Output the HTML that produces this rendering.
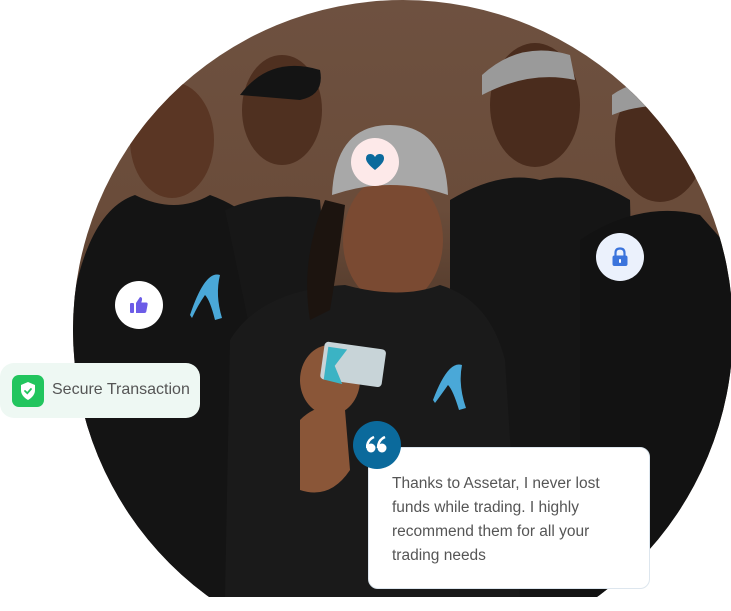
<!DOCTYPE html>
<html><head><meta charset="utf-8"><style>
html,body{margin:0;padding:0;background:#fff;width:731px;height:611px;overflow:hidden;font-family:"Liberation Sans",sans-serif}
.circ{position:absolute;left:0;top:0;width:731px;height:597px;clip-path:circle(330px at 403px 330px);background:linear-gradient(180deg,#6e5140 0%,#6a4c3a 35%,#4a3426 60%,#1c1816 100%)}
.abs{position:absolute}
.ic{position:absolute;width:48px;height:48px;border-radius:50%;display:flex;align-items:center;justify-content:center}
</style></head><body>
<div class="circ">
<svg width="731" height="597" viewBox="0 0 731 597" style="position:absolute;left:0;top:0">
 <ellipse cx="172" cy="140" rx="42" ry="58" fill="#5a3624"/>
 <ellipse cx="282" cy="110" rx="40" ry="55" fill="#4f3020"/>
 <ellipse cx="535" cy="105" rx="45" ry="62" fill="#4a2c1d"/>
 <ellipse cx="660" cy="140" rx="45" ry="62" fill="#4a2c1d"/>
 <ellipse cx="393" cy="240" rx="50" ry="65" fill="#7a4a32"/>
 <path d="M240 95 Q270 55 320 70 Q325 95 300 100 Z" fill="#141414"/>
 <path d="M482 75 Q520 40 570 55 L575 80 Q530 70 482 95Z" fill="#9a9a9a"/>
 <path d="M332 195 Q335 125 390 125 Q445 125 448 195 Q390 175 332 195Z" fill="#a8a8a8"/>
 <path d="M612 95 Q640 75 680 85 L690 110 Q650 100 612 115Z" fill="#9a9a9a"/>
 <path d="M73 300 Q90 210 135 195 Q175 215 210 195 Q280 220 290 300 L300 597 L73 597Z" fill="#141414"/>
 <path d="M225 210 Q270 190 320 200 L330 320 L250 330Z" fill="#171717"/>
 <path d="M450 200 Q500 170 540 180 Q580 170 630 200 L640 597 L450 597Z" fill="#151515"/>
 <path d="M580 240 Q640 200 700 215 L740 260 L740 597 L580 597Z" fill="#121212"/>
 <path d="M230 340 Q260 290 345 285 Q400 300 440 285 Q490 300 505 360 L520 597 L225 597Z" fill="#1a1a1a"/>
 <path d="M325 200 Q300 260 310 320 L330 310 Q340 250 345 205Z" fill="#1c140f"/>
 <path d="M190 315 Q205 270 220 275 Q215 295 222 318 L215 320 Q210 300 205 295 Q198 305 192 318Z" fill="#4aa8d8"/>
 <path d="M433 400 Q448 360 462 365 Q458 385 466 408 L459 410 Q453 390 448 385 Q441 395 435 403Z" fill="#4aa8d8"/>
 <ellipse cx="330" cy="380" rx="30" ry="35" fill="#8a5638"/>
 <path d="M300 420 Q320 400 345 410 L350 470 Q330 500 300 490Z" fill="#8a5638"/>
 <rect x="322" y="345" width="62" height="38" rx="4" fill="#c8d4d8" transform="rotate(8 350 365)"/>
 <path d="M326 350 L345 350 L335 368 L345 385 L326 383Z" fill="#3bb3c4" transform="rotate(8 350 365)"/>
</svg>
</div>

<div class="abs" style="left:0;top:363px;width:200px;height:55px;background:#eef8f3;border-radius:14px"></div>
<div class="abs" style="left:12px;top:375px;width:32px;height:32px;border-radius:7px;background:#22c55e;display:flex;align-items:center;justify-content:center">
<svg width="18" height="20" viewBox="0 0 18 20"><path d="M9 1 L16 4 V9 Q16 15 9 19 Q2 15 2 9 V4Z" fill="#fff"/><path d="M6 10 L8.3 12.2 L12 8" stroke="#22c55e" stroke-width="1.8" fill="none" stroke-linecap="round"/></svg></div>
<div class="abs" style="left:52px;top:381px;font-size:16px;color:#555">Secure Transaction</div>

<div class="abs" style="left:368px;top:447px;width:282px;height:142px;background:#fff;border:1px solid #dde6ee;border-radius:10px;box-sizing:border-box"></div>
<div class="abs" style="left:392px;top:472px;width:222px;font-size:15.5px;line-height:24px;color:#555">Thanks to Assetar, I never lost funds while trading. I highly recommend them for all your trading needs</div>
<div class="ic" style="left:353px;top:421px;background:#0b6a9c">
<svg width="22" height="18" viewBox="0 0 22 18"><circle cx="5" cy="12" r="4.5" fill="#fff"/><path d="M1 12 Q1 4 8 1" stroke="#fff" stroke-width="2.5" fill="none"/><circle cx="16" cy="12" r="4.5" fill="#fff"/><path d="M12 12 Q12 4 19 1" stroke="#fff" stroke-width="2.5" fill="none"/></svg></div>

<div class="ic" style="left:351px;top:138px;background:#fde9e9">
<svg width="20" height="18" viewBox="0 0 20 18"><path d="M10 17 Q1 10 1 5.5 Q1 1 5.5 1 Q8.5 1 10 4 Q11.5 1 14.5 1 Q19 1 19 5.5 Q19 10 10 17Z" fill="#0b6a9c"/></svg></div>
<div class="ic" style="left:596px;top:233px;background:#ebf1fc">
<svg width="18" height="20" viewBox="0 0 18 20"><path d="M4.5 9 V6 Q4.5 1.5 9 1.5 Q13.5 1.5 13.5 6 V9" stroke="#3b74dc" stroke-width="2.2" fill="none"/><rect x="1.5" y="8.5" width="15" height="10.5" rx="2" fill="#3b74dc"/><rect x="8" y="12" width="2" height="4" rx="1" fill="#fff"/></svg></div>
<div class="ic" style="left:115px;top:281px;background:#fff">
<svg width="20" height="18" viewBox="0 0 20 18"><rect x="1" y="7" width="4" height="10" rx="1" fill="#6c5ce7"/><path d="M7 7 L11 1 Q13.5 1 13 4 L12.3 6.5 H17 Q19 6.5 18.6 8.6 L17.3 15.5 Q17 17 15.3 17 H7Z" fill="#6c5ce7"/></svg></div>
</body></html>
